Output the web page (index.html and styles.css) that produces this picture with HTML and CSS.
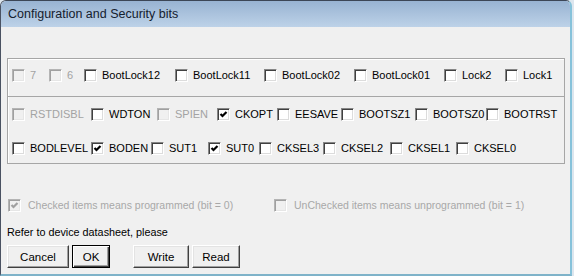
FILE: index.html
```html
<!DOCTYPE html>
<html lang="en">
  <head>
    <meta charset="utf-8" />
    <title>Configuration and Security bits</title>
    <link rel="stylesheet" href="styles.css">
  </head>
  <body>
    <div class="window">
      <div class="titlebar">Configuration and Security bits</div>
      <div class="client">
        <div class="bits">
          <div class="row row-lock">
            <label class="bit off"><span class="cb"></span>7</label>
            <label class="bit off"><span class="cb"></span>6</label>
            <label class="bit"><span class="cb"></span>BootLock12</label>
            <label class="bit"><span class="cb"></span>BootLock11</label>
            <label class="bit"><span class="cb"></span>BootLock02</label>
            <label class="bit"><span class="cb"></span>BootLock01</label>
            <label class="bit"><span class="cb"></span>Lock2</label>
            <label class="bit"><span class="cb"></span>Lock1</label>
          </div>
          <div class="row row-high">
            <label class="bit off"><span class="cb"></span>RSTDISBL</label>
            <label class="bit"><span class="cb"></span>WDTON</label>
            <label class="bit off"><span class="cb"></span>SPIEN</label>
            <label class="bit"><span class="cb on"><svg viewBox="0 0 9 9"><polyline points="1.5,4 3.5,6 7.5,2" /></svg></span>CKOPT</label>
            <label class="bit"><span class="cb"></span>EESAVE</label>
            <label class="bit"><span class="cb"></span>BOOTSZ1</label>
            <label class="bit"><span class="cb"></span>BOOTSZ0</label>
            <label class="bit"><span class="cb"></span>BOOTRST</label>
          </div>
          <div class="row row-low">
            <label class="bit"><span class="cb"></span>BODLEVEL</label>
            <label class="bit"><span class="cb on"><svg viewBox="0 0 9 9"><polyline points="1.5,4 3.5,6 7.5,2" /></svg></span>BODEN</label>
            <label class="bit"><span class="cb"></span>SUT1</label>
            <label class="bit"><span class="cb on"><svg viewBox="0 0 9 9"><polyline points="1.5,4 3.5,6 7.5,2" /></svg></span>SUT0</label>
            <label class="bit"><span class="cb"></span>CKSEL3</label>
            <label class="bit"><span class="cb"></span>CKSEL2</label>
            <label class="bit"><span class="cb"></span>CKSEL1</label>
            <label class="bit"><span class="cb"></span>CKSEL0</label>
          </div>
        </div>

        <div class="legend">
          <label class="bit off"><span class="cb on"><svg viewBox="0 0 9 9"><polyline points="1.5,4 3.5,6 7.5,2" /></svg></span>Checked items means programmed (bit = 0)</label>
          <label class="bit off"><span class="cb"></span>UnChecked items means unprogrammed (bit = 1)</label>
        </div>

        <p class="note">Refer to device datasheet, please</p>

        <div class="buttons">
          <button class="btn btn-cancel">Cancel</button>
          <button class="btn btn-ok">OK</button>
          <button class="btn btn-write">Write</button>
          <button class="btn btn-read">Read</button>
        </div>
      </div>
    </div>
  </body>
</html>
```

FILE: styles.css
```css
html,
body {
  margin: 0px;
  padding: 0px;
  background-color: #dde6ee;
}
body {
  width: 574px;
  height: 276px;
  overflow: hidden;
  font-family: "Liberation Sans", Arial, sans-serif;
  font-size: 11px;
  color: #000000;
}
.window {
  width: 569px;
  height: 273px;
  background-color: #f0f0f0;
  border-top: 1px solid #3c4656;
  border-left: 1px solid #4a5262;
  border-right: 2px solid #86c2da;
  border-bottom: 2px solid #7fb3c9;
  border-radius: 6px 6px 0px 0px;
  overflow: hidden;
}
.titlebar {
  height: 26px;
  padding-left: 7px;
  line-height: 26px;
  font-size: 12.5px;
  color: #14202e;
  background: linear-gradient(#98b3d2, #bdd2e8);
}
.client {
  padding: 0px 5px 0px 6px;
}

/* group of fuse / lock bits */
.bits {
  margin-top: 31px;
  height: 104px;
  border: 1px solid #a6a6a6;
  box-shadow: inset 1px 1px #ffffff;
}
.row {
  display: grid;
  height: 13px;
  padding-left: 4px;
  align-items: center;
}
.row-lock {
  grid-template-columns: 37px 35px 91px 89px 90px 90px 61px auto;
  padding-top: 10px;
  padding-bottom: 14px;
  border-bottom: 1px solid #a6a6a6;
}
.row-high {
  grid-template-columns: 79px 66px 60px 60px 64px 74px 71px auto;
  margin-top: 11px;
}
.row-low {
  grid-template-columns: 79px 60px 57px 51px 64px 67px 66px auto;
  margin-top: 21px;
}
.bit {
  display: flex;
  align-items: center;
  gap: 5px;
  height: 13px;
  line-height: 13px;
  white-space: nowrap;
}
.bit.off {
  color: #a3a3a3;
}
.cb {
  display: inline-block;
  flex: none;
  width: 13px;
  height: 13px;
  box-sizing: border-box;
  background-color: #ffffff;
  border: 1px solid;
  border-color: #868686 #ffffff #ffffff #868686;
  box-shadow: inset 1px 1px #404040, inset -1px -1px #dcdcdc;
  position: relative;
}
.off .cb {
  background-color: #f0f0f0;
  border-color: #b4b4b4 #ffffff #ffffff #b4b4b4;
  box-shadow: inset 1px 1px #a0a0a0, inset -1px -1px #e6e6e6;
}
.cb svg {
  position: absolute;
  left: 1px;
  top: 1px;
  width: 9px;
  height: 9px;
}
.cb polyline {
  fill: none;
  stroke: #000000;
  stroke-width: 2.2;
}
.off .cb polyline {
  stroke: #a0a0a0;
}

.legend {
  display: grid;
  grid-template-columns: 266px auto;
  margin-top: 35px;
  padding-left: 1px;
  font-size: 10.5px;
}
.legend .bit {
  gap: 7px;
  color: #a8a8a8;
}
.note {
  margin: 14px 0px 0px 0px;
  line-height: 13px;
  font-size: 10.8px;
}
.buttons {
  display: flex;
  margin-top: 6px;
}
.btn {
  height: 23px;
  padding: 0px;
  margin: 0px;
  font-family: "Liberation Sans", Arial, sans-serif;
  font-size: 11.5px;
  color: #000000;
  background-color: #f0f0f0;
  border: 1px solid;
  border-color: #ffffff #404040 #404040 #ffffff;
  box-shadow: inset -1px -1px #a0a0a0, inset 1px 1px #e3e3e3;
}
.btn-cancel {
  width: 62px;
}
.btn-ok {
  width: 38px;
  margin-left: 3px;
  border-color: #000000;
  box-shadow: inset 1px 1px #ffffff, inset -1px -1px #404040, inset -2px -2px #a0a0a0;
}
.btn-write {
  width: 56px;
  margin-left: 23px;
}
.btn-read {
  width: 48px;
  margin-left: 3px;
}
```
